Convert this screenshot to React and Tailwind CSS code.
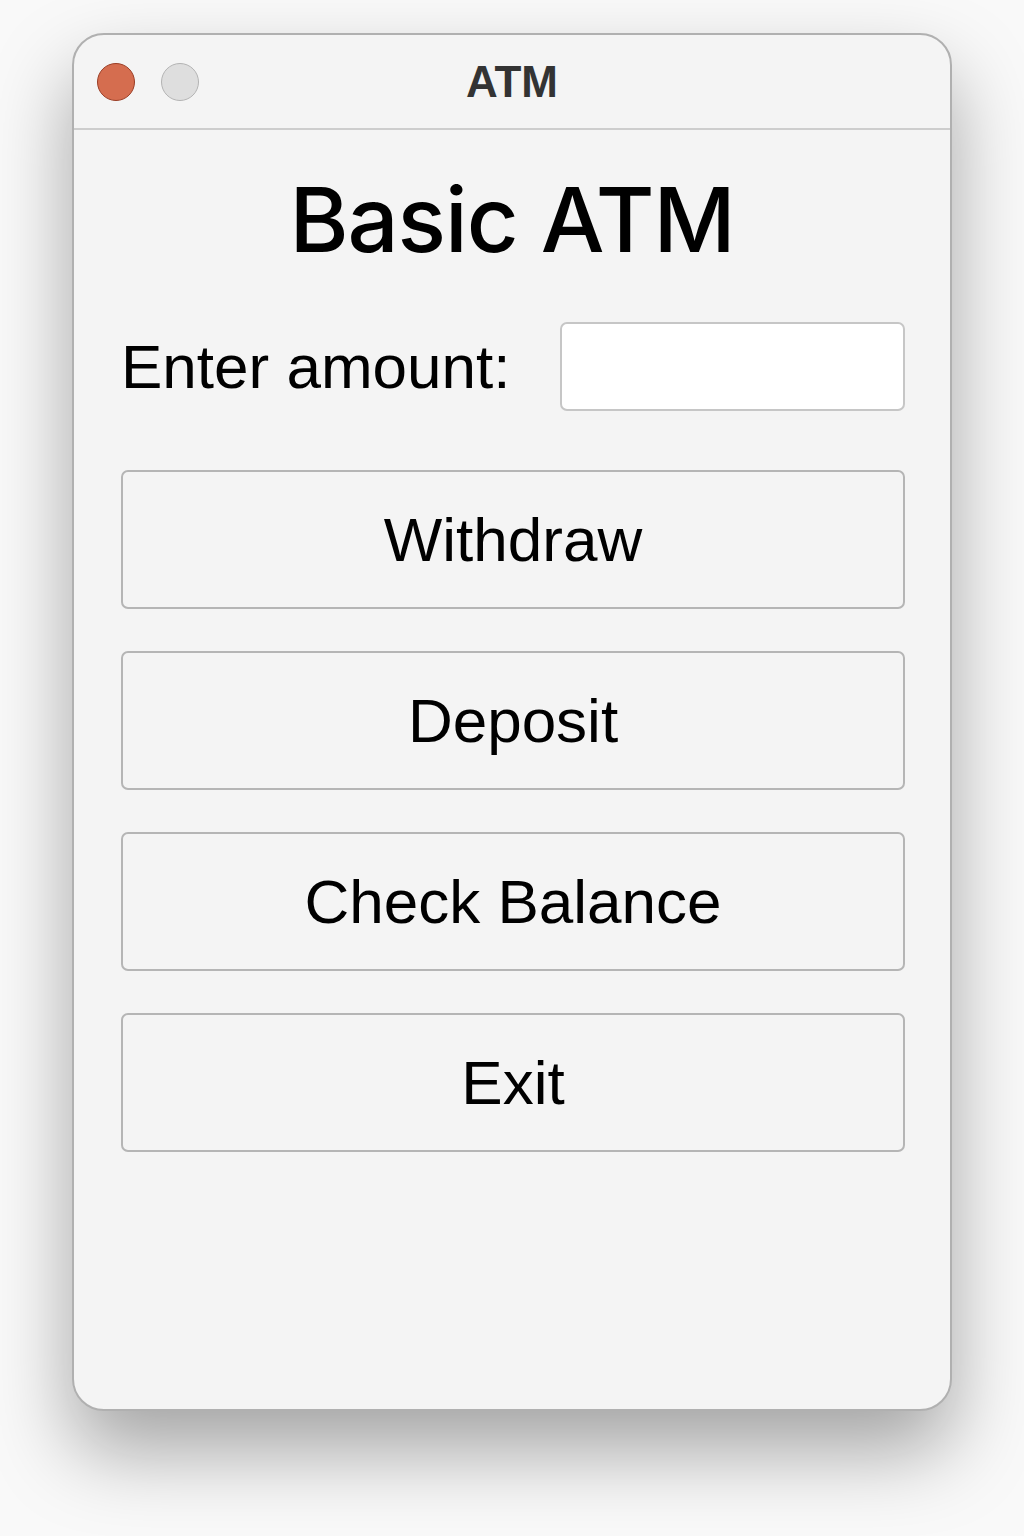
export default function App() {
  const buttons = ["Withdraw", "Deposit", "Check Balance", "Exit"]

  return (
    <main className="min-h-[1536px] w-full bg-[#f9f9f9] pt-[33px]">
      <div className="mx-auto w-[880px] h-[1378px] rounded-[32px] border-2 border-[#b0b0b0] bg-[#f4f4f4] shadow-[0_40px_80px_rgba(0,0,0,0.34)] overflow-hidden flex flex-col">
        <header className="relative h-[95px] shrink-0 border-b-2 border-[#cdcdcd] flex items-center gap-[26px] pl-[23px]">
          <span className="w-[38px] h-[38px] rounded-full bg-[#d56d4f] border border-[#9a3d25]" />
          <span className="w-[38px] h-[38px] rounded-full bg-[#dedede] border border-[#b3b3b3]" />
          <h1 className="absolute inset-x-0 top-0 h-full flex items-center justify-center text-[44px] font-bold text-[#333] font-['Liberation_Sans',Arial,sans-serif] pointer-events-none">
            ATM
          </h1>
        </header>

        <section className="flex flex-col px-[47px] pt-[45px]">
          <h2 className="text-center text-[90px] leading-none font-medium tracking-[-1px] text-black font-['Inter','Liberation_Sans',sans-serif]">
            Basic ATM
          </h2>

          <div className="mt-[57px] flex items-center justify-between font-['Liberation_Sans',Arial,sans-serif]">
            <label className="text-[62px] leading-none text-black">Enter amount:</label>
            <input
              type="text"
              className="w-[345px] h-[89px] -mr-[2px] rounded-[7px] border-2 border-[#c6c6c6] bg-white outline-none"
            />
          </div>

          <div className="mt-[59px] flex flex-col gap-[42px]">
            {buttons.map((label) => (
              <button
                key={label}
                className="h-[139px] w-[784px] rounded-[7px] border-2 border-[#b5b5b5] bg-[#f4f4f4] text-[62px] text-black font-['Liberation_Sans',Arial,sans-serif]"
              >
                {label}
              </button>
            ))}
          </div>
        </section>
      </div>
    </main>
  )
}
